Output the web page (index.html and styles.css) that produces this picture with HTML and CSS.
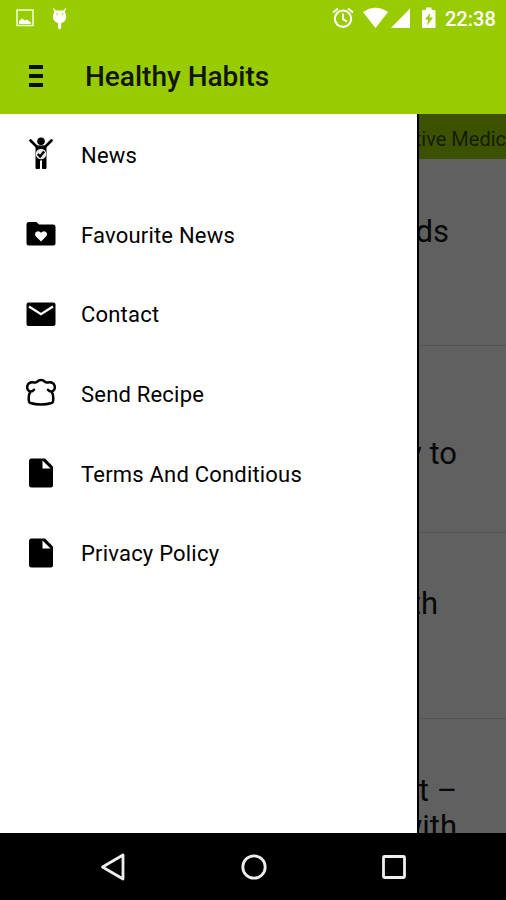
FILE: index.html
```html
<!DOCTYPE html>
<html lang="en">
<head>
<meta charset="utf-8">
<title>Healthy Habits</title>
<link rel="stylesheet" href="styles.css">
</head>
<body>
<div class="screen">
  <header class="header">
    <div class="status">
      <svg class="status-left" width="60" height="38" viewBox="0 0 60 38">
        <rect x="2" y="10" width="16" height="15.5" fill="none" stroke="#f4ffd9" stroke-width="1.5"/>
        <path d="M4 24v-3l3-2.500 3 2 2-1 4 3v1.500z" fill="#fff"/>
        <path d="M38.500 8l2 2.500h8L50.500 8l.7.5-1.400 3q1.700 3 1.400 6.500-1 4-5 5v4q0 2.200-1.500 2.200T43 27v-4q-4-1-5-5-.3-3.500 1.400-6.500l-1.600-3z" fill="#fff"/>
        <circle cx="42" cy="14" r=".8" fill="#98cc00"/><circle cx="47.500" cy="14" r=".8" fill="#98cc00"/>
      </svg>
      <svg class="status-right" width="108" height="38" viewBox="0 0 108 38">
        <g fill="none" stroke="#fff" stroke-width="2.100">
          <circle cx="13" cy="18.700" r="8.200"/>
          <path d="M3 12.500l5-4M18 8.500l5 4M13 13.500v5.700l4 2.500"/>
        </g>
        <path d="M33 12Q45.500 3.500 58 12L45.500 28zM80 8.500V28H61z" fill="#fff"/>
        <path d="M96 7.500h5.500V10h3q1 0 1 1v16q0 1-1 1H93q-1 0-1-1V11q0-1 1-1h3z" fill="#fff"/>
        <path d="M100.500 12.500l-5.500 7h3.200l-1.200 6 6-8h-3.700z" fill="#98cc00"/>
      </svg>
      <span class="clock">22:38</span>
    </div>
    <div class="toolbar">
      <div class="burger"><i></i><i></i><i></i></div>
      <h1>Healthy Habits</h1>
    </div>
  </header>
  <main class="body">
    <nav class="drawer">
      <a class="item"><svg width="32" height="36" viewBox="0 0 32 36"><circle cx="16" cy="5.300" r="3.800"/><path d="M5.500 4.500L12 11h8l6.500-6.500" fill="none" stroke="#000" stroke-width="2.700" stroke-linecap="round"/><path d="M11 10h10v22.500h-3.500V24h-3v8.500H11z"/><path d="M11 10h10v22.500h-3.500V24h-3v8.500H11z" fill="none" stroke="#000"/><circle cx="16" cy="18" r="5.300" fill="#e8e8e8"/><path d="M12.800 18l2.300 2.500 4-5" fill="none" stroke="#000" stroke-width="2.400"/></svg><span>News</span></a>
      <a class="item"><svg width="32" height="36" viewBox="0 0 32 36"><path d="M4 6h7.500l2.500 2.500h14q2.500 0 2.500 2.500v16.500q0 2-2 2h-25q-2 0-2-2V8q0-2 2.500-2z"/><path d="M16 25.500l-5-5q-2-2.700 0-4.500 2.700-2 5 .7 2.300-2.700 5-.7 2 1.800 0 4.500z" fill="#fff"/></svg><span>Favourite News</span></a>
      <a class="item"><svg width="32" height="36" viewBox="0 0 32 36"><rect x="1.500" y="6.500" width="29" height="23.500" rx="2"/><path d="M4 10.500l12 7.700 12-7.700" fill="none" stroke="#fff" stroke-width="2.300"/></svg><span>Contact</span></a>
      <a class="item"><svg width="32" height="36" viewBox="0 0 32 36"><path d="M5.500 16.500Q1.500 15.500 2.300 11 3.700 6.500 9 7.500q2 .3 3-.7Q14 5 16 5t4 1.800q1 1 3 .7 5.300-1 6.700 3.500.8 4.500-3.200 5.500 2 3 1.800 6.500l-.2 3.200q-.1 1.300-1.500 1.800-4.600 1.500-10.600 1.500T5.400 28Q4 27.500 3.900 26.200L3.700 23q-.2-3.500 1.800-6.500zM5.500 16.500q2 .2 3.500-1.800M26.500 16.500q-2 .2-3.500-1.800" fill="none" stroke="#000" stroke-width="2.500" stroke-linejoin="round" stroke-linecap="round"/></svg><span>Send Recipe</span></a>
      <a class="item"><svg width="32" height="36" viewBox="0 0 32 36"><path d="M6.500 3.500H20l8 8v18.500q0 2.500-2.500 2.500h-19Q4 32.500 4 30V6q0-2.500 2.500-2.500z"/><path d="M17.500 5.500v8h8z" fill="#fff"/></svg><span>Terms And Conditious</span></a>
      <a class="item"><svg width="32" height="36" viewBox="0 0 32 36"><path d="M6.500 3.500H20l8 8v18.500q0 2.500-2.500 2.500h-19Q4 32.500 4 30V6q0-2.500 2.500-2.500z"/><path d="M17.500 5.500v8h8z" fill="#fff"/></svg><span>Privacy Policy</span></a>
    </nav>
    <section class="feed">
      <div class="tab"><span>tive Medic</span></div>
      <article class="card card-a"><p>ds</p></article>
      <article class="card card-b"><p>y to</p></article>
      <article class="card card-c"><p>th</p></article>
      <article class="card card-d"><p>t –</p><p>with</p></article>
    </section>
  </main>
  <footer class="navbar">
    <svg width="28" height="30" viewBox="0 0 28 30"><path d="M24 3v24L3.500 15z"/></svg>
    <svg width="28" height="30" viewBox="0 0 28 30"><circle cx="14" cy="15" r="11.200"/></svg>
    <svg width="28" height="30" viewBox="0 0 28 30"><rect x="3.500" y="4.500" width="21" height="21" rx="1"/></svg>
  </footer>
</div>
</body>
</html>
```
FILE: styles.css
```css
* { box-sizing: border-box; }
body { margin: 0; font-family: Roboto, "Liberation Sans", sans-serif; color: #000; }
h1, p { margin: 0; }
.screen { width: 506px; height: 900px; display: flex; flex-direction: column; overflow: hidden; }
.header { height: 114px; background: #98cc00; flex: none; }
.status { height: 38px; display: flex; padding-left: 15px; color: #fff; }
.status svg { flex: none; }
.status-right { margin-left: 255px; }
.clock { margin-left: 7px; font-size: 20px; font-weight: 500; line-height: 38px; }
.toolbar { height: 76px; display: flex; align-items: center; padding-left: 29px; }
.burger { width: 14px; display: grid; gap: 5px; }
.burger i { height: 4px; background: #0c1000; }
h1 { margin-left: 42px; padding-top: 1px; font-size: 28px; font-weight: 500; line-height: 36px; color: #101600; white-space: nowrap; }
.body { height: 719px; display: flex; flex: none; }
.drawer { width: 419px; flex: none; background: #fff; border-right: 2px solid #000; padding-top: 1px; }
.item { height: 79.700px; display: flex; align-items: center; padding-left: 24.500px; gap: 24.500px; font-size: 22px; letter-spacing: .2px; white-space: nowrap; }
.item svg { flex: none; margin-top: -1px; }
.item span { padding-top: 1px; }
.feed { width: 87px; background: #606060; overflow: hidden; }
.tab { height: 45px; background: #3d5200; display: flex; justify-content: flex-end; align-items: center; font-size: 20px; color: #151c00; white-space: nowrap; padding-top: 4px; }
.card { height: 187px; border-bottom: 1px solid #555; display: flex; flex-direction: column; align-items: flex-end; font-size: 31px; line-height: 36px; white-space: nowrap; color: #080808; }
.card-a { padding: 55px 57px 0 0; }
.card-b { padding: 90px 49px 0 0; }
.card-c { height: 186px; padding: 53px 68px 0 0; }
.card-d { padding: 54px 49px 0 0; }
.navbar { height: 67px; background: #000; display: flex; justify-content: space-between; padding: 19px 98px 0 99px; }
.navbar svg { fill: none; stroke: #eee; stroke-width: 2.800; stroke-linejoin: round; }
```
